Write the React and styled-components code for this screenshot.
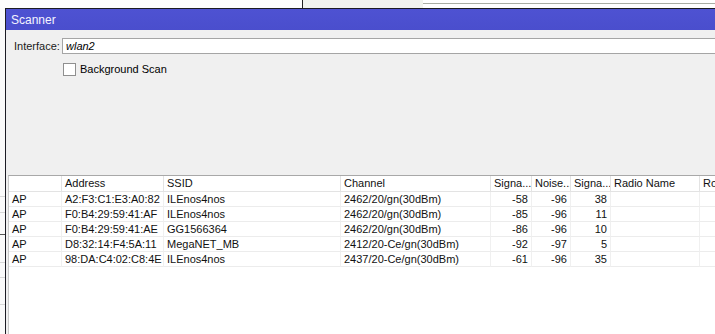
import React from 'react';
import styled, { createGlobalStyle } from 'styled-components';

const GlobalStyle = createGlobalStyle`
  html, body {
    margin: 0;
    padding: 0;
    background: #ffffff;
  }
  body {
    font-family: "Liberation Sans", Arial, sans-serif;
    font-size: 11px;
    color: #000;
  }
`;

const Page = styled.div`
  width: 715px;
  height: 334px;
  overflow: hidden;
  display: flex;
  flex-direction: column;
`;

const TopStrip = styled.div`
  height: 8px;
  display: flex;
  flex-shrink: 0;
`;

const StripPart = styled.div`
  width: ${p => (p.$w ? `${p.$w}px` : 'auto')};
  flex: ${p => (p.$w ? 'none' : '1')};
  background: ${p => p.$bg || '#fff'};
  border-left: ${p => p.$line || 'none'};
  border-top: ${p => p.$topLine || 'none'};
  margin-top: ${p => p.$mt || 0}px;
`;

const Main = styled.div`
  flex: 1;
  display: flex;
  min-height: 0;
`;

const Gutter = styled.div`
  width: 5px;
  flex-shrink: 0;
  background: #fafafa;
  display: flex;
  flex-direction: column;
`;

const GutterLine = styled.div`
  height: ${p => p.$h}px;
  border-bottom: 1px solid ${p => p.$c || '#d8d8d8'};
  flex-shrink: 0;
`;

const Window = styled.div`
  flex: 1;
  display: flex;
  flex-direction: column;
  border-left: 1px solid #1c1c24;
  border-top: 1px solid #1c1c24;
  min-width: 0;
`;

const TitleBar = styled.div`
  height: 21px;
  flex-shrink: 0;
  background: linear-gradient(#4e52d2, #4a4ecd);
  color: #f4f4ff;
  font-size: 12px;
  display: flex;
  align-items: center;
  padding-left: 5px;
`;

const Body = styled.div`
  flex: 1;
  background: #f0f0f0;
  display: flex;
  flex-direction: column;
  min-height: 0;
`;

const FormRow = styled.div`
  display: flex;
  align-items: center;
  height: 17px;
  margin-top: 7px;
  padding-left: 8px;
`;

const Label = styled.span`
  width: 48px;
  color: #1a1a1a;
`;

const Input = styled.div`
  flex: 1;
  height: 14px;
  background: #fff;
  border: 1px solid #a5a5a5;
  border-right: none;
  font-style: italic;
  display: flex;
  align-items: center;
  padding-left: 3px;
`;

const CheckRow = styled.div`
  display: flex;
  align-items: center;
  gap: 4px;
  margin-top: 8px;
  padding-left: 57px;
  height: 14px;
`;

const Box = styled.span`
  width: 11px;
  height: 11px;
  background: #fff;
  border: 1px solid #8f8f8f;
`;

const Splitter = styled.div`
  height: 99px;
  flex-shrink: 0;
`;

const TableWrap = styled.div`
  flex: 1;
  background: #fff;
  margin-left: 2px;
  border-left: 1px solid #c8c8c8;
  border-top: 1px solid #a8a8a8;
`;

const Grid = styled.div`
  display: grid;
  grid-template-columns: 53px 102px 177px 150px 41px 39px 40px 89px 40px;
`;

const HeadCell = styled.div`
  height: 15px;
  line-height: 15px;
  padding-left: 3px;
  border-right: 1px solid #e3e3e3;
  border-bottom: 1px solid #e3e3e3;
  white-space: nowrap;
  overflow: hidden;
  color: #111;
`;

const Cell = styled.div`
  height: 14px;
  line-height: 14px;
  padding: 0 3px;
  text-align: ${p => (p.$num ? 'right' : 'left')};
  border-right: 1px solid #f0f0f0;
  border-bottom: 1px solid #ececec;
  white-space: nowrap;
  overflow: hidden;
  color: #111;
`;

const headers = ['', 'Address', 'SSID', 'Channel', 'Signa...', 'Noise...', 'Signa...', 'Radio Name', 'Ro'];

const rows = [
  ['AP', 'A2:F3:C1:E3:A0:82', 'ILEnos4nos', '2462/20/gn(30dBm)', '-58', '-96', '38'],
  ['AP', 'F0:B4:29:59:41:AF', 'ILEnos4nos', '2462/20/gn(30dBm)', '-85', '-96', '11'],
  ['AP', 'F0:B4:29:59:41:AE', 'GG1566364', '2462/20/gn(30dBm)', '-86', '-96', '10'],
  ['AP', 'D8:32:14:F4:5A:11', 'MegaNET_MB', '2412/20-Ce/gn(30dBm)', '-92', '-97', '5'],
  ['AP', '98:DA:C4:02:C8:4E', 'ILEnos4nos', '2437/20-Ce/gn(30dBm)', '-61', '-96', '35'],
];

export default function App() {
  return (
    <Page>
      <GlobalStyle />
      <TopStrip>
        <StripPart $w={302} $bg="#fdfdfd" />
        <StripPart $w={120} $bg="#f1f3ee" $line="1px solid #222" />
        <StripPart $bg="#fff" $topLine="1px solid #a9ada4" $mt={3} />
      </TopStrip>
      <Main>
        <Gutter>
          <GutterLine $h={188} />
          <GutterLine $h={15} />
          <GutterLine $h={21} $c="#555" />
          <GutterLine $h={27} />
          <GutterLine $h={14} />
          <GutterLine $h={26} />
        </Gutter>
        <Window>
          <TitleBar>Scanner</TitleBar>
          <Body>
            <FormRow>
              <Label>Interface:</Label>
              <Input>wlan2</Input>
            </FormRow>
            <CheckRow>
              <Box />
              <span>Background Scan</span>
            </CheckRow>
            <Splitter />
            <TableWrap>
              <Grid>
                {headers.map((h, i) => (
                  <HeadCell key={i}>{h}</HeadCell>
                ))}
                {rows.map((r, ri) =>
                  [...r, '', ''].map((c, ci) => (
                    <Cell key={`${ri}-${ci}`} $num={ci >= 4 && ci <= 6}>
                      {c}
                    </Cell>
                  ))
                )}
              </Grid>
            </TableWrap>
          </Body>
        </Window>
      </Main>
    </Page>
  );
}
